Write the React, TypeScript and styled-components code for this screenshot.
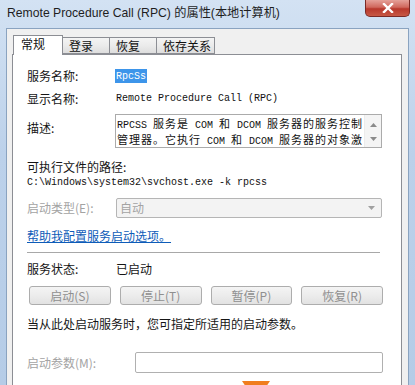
import React from "react";
import styled, { createGlobalStyle } from "styled-components";

const UI_FONT = `"Noto Sans CJK SC", "Liberation Sans", sans-serif`;

const GlobalStyle = createGlobalStyle`
  html, body {
    margin: 0;
    padding: 0;
    background: #c3d6ec;
  }
  #root {
    width: 415px;
    height: 385px;
    overflow: hidden;
  }
`;

// Окно целиком
const Window = styled.div`
  position: relative;
  width: 415px;
  height: 385px;
  display: flex;
  flex-direction: column;
  background: linear-gradient(180deg, #d3e2f3 0%, #bcd1ea 40%, #b5cce7 100%);
  overflow: hidden;
`;

const TitleBar = styled.div`
  flex: none;
  height: 28px;
  display: flex;
  justify-content: space-between;
  align-items: flex-start;
  padding: 0 5px 0 7px;
  box-sizing: border-box;
`;

const TitleText = styled.div`
  margin-top: 5px;
  font-family: "Liberation Sans", "Noto Sans CJK SC", sans-serif;
  font-size: 12.2px;
  line-height: 16px;
  color: #1e1e1e;
  white-space: nowrap;
`;

const CloseButton = styled.div`
  width: 45px;
  height: 17px;
  box-sizing: border-box;
  border: 1px solid #7a2a26;
  border-top: none;
  border-radius: 0 0 5px 5px;
  background: linear-gradient(180deg, #e5a199 0%, #d0685d 45%, #b8382c 55%, #c75845 100%);
  display: flex;
  align-items: center;
  justify-content: center;
`;

const DialogBody = styled.div`
  flex: 1;
  min-height: 0;
  overflow: hidden;
  margin: 0 6px 0 6px;
  padding: 6px 6px 0 5px;
  background: #f0f0f0;
  border: 1px solid #8aa3c0;
  border-bottom: none;
`;

const TabRow = styled.div`
  display: flex;
  align-items: flex-end;
  height: 19px;
  padding-left: 1px;
  position: relative;
  z-index: 1;
`;

const Tab = styled.div<{ $active?: boolean; $first?: boolean; $w?: number }>`
  box-sizing: border-box;
  height: ${(p) => (p.$active ? "20px" : "17px")};
  margin-bottom: ${(p) => (p.$active ? "-1px" : "0")};
  width: ${(p) => (p.$w ? `${p.$w}px` : "47px")};
  padding-left: ${(p) => (p.$active ? "7px" : "6px")};
  border: 1px solid #8c8e94;
  border-bottom: ${(p) => (p.$active ? "none" : "1px solid #8c8e94")};
  border-left: ${(p) => (p.$first ? "1px solid #8c8e94" : "none")};
  background: ${(p) =>
    p.$active ? "#ffffff" : "linear-gradient(180deg, #f4f4f4 0%, #ebebeb 50%, #dedede 100%)"};
  font-family: ${UI_FONT};
  font-size: 12px;
  line-height: 16px;
  color: #111;
  white-space: nowrap;
`;

const Panel = styled.div`
  height: 340px;
  background: #ffffff;
  border: 1px solid #8c8e94;
  padding: 13px 18px 0 14px;
  display: flex;
  flex-direction: column;
`;

const Row = styled.div<{ $mt?: number; $h?: number }>`
  display: flex;
  align-items: center;
  margin-top: ${(p) => p.$mt ?? 0}px;
  height: ${(p) => p.$h ?? 16}px;
  flex: none;
`;

const Label = styled.div<{ $w?: number; $disabled?: boolean; $top?: number }>`
  width: ${(p) => p.$w ?? 89}px;
  flex: none;
  font-family: ${UI_FONT};
  font-size: 12px;
  line-height: 16px;
  color: ${(p) => (p.$disabled ? "#a3a3a3" : "#151515")};
  white-space: nowrap;
  align-self: ${(p) => (p.$top !== undefined ? "flex-start" : "center")};
  margin-top: ${(p) => p.$top ?? 0}px;
`;

const Text = styled.div<{ $disabled?: boolean }>`
  font-family: ${UI_FONT};
  font-size: 12px;
  line-height: 16px;
  color: ${(p) => (p.$disabled ? "#a3a3a3" : "#151515")};
  white-space: nowrap;
`;

// Моноширинная строка: латиница 6px, иероглифы 12px
const MonoRow = styled.div`
  display: flex;
  align-items: baseline;
  height: 16px;
  white-space: pre;
  color: #111;
`;

const Narrow = styled.span`
  line-height: 16px;
  font-family: "Liberation Mono", monospace;
  font-size: 10px;
`;

const Wide = styled.span`
  line-height: 16px;
  font-family: "Noto Sans CJK SC", sans-serif;
  font-size: 11px;
  letter-spacing: 1px;
`;

const Selected = styled.div`
  margin-left: -1px;
  padding: 0 1px;
  height: 14px;
  display: flex;
  align-items: center;
  background: #3d95ea;
  font-family: "Liberation Mono", monospace;
  font-size: 10px;
  color: #ffffff;
`;

const DescBox = styled.div`
  margin-left: -1px;
  width: 267px;
  height: 34px;
  box-sizing: border-box;
  border: 1px solid #ababab;
  display: flex;
`;

const DescText = styled.div`
  flex: 1;
  padding: 0 0 0 1px;
`;

const ScrollBar = styled.div`
  width: 17px;
  background: #f4f4f4;
  border-left: 1px solid #ececec;
  display: flex;
  flex-direction: column;
  align-items: center;
  justify-content: space-between;
  padding: 8px 0 6px;
  box-sizing: border-box;
`;

const Select = styled.div`
  width: 266px;
  height: 20px;
  box-sizing: border-box;
  border: 1px solid #b5b5b5;
  border-radius: 2px;
  background: #f3f3f3;
  display: flex;
  align-items: center;
  justify-content: space-between;
  padding: 0 6px 0 3px;
`;

const Link = styled.div`
  font-family: ${UI_FONT};
  font-size: 12px;
  line-height: 16px;
  color: #0e5cb8;
  text-decoration: underline;
  white-space: nowrap;
`;

const Separator = styled.div`
  flex: none;
  margin-top: 8px;
  width: 353px;
  height: 1px;
  background: #a8a8a8;
`;

const ButtonRow = styled.div`
  flex: none;
  display: flex;
  gap: 9px;
  margin-top: 9px;
  margin-left: 2px;
`;

const Button = styled.div`
  width: 82px;
  height: 19px;
  box-sizing: border-box;
  border: 1px solid #adadad;
  border-radius: 3px;
  background: linear-gradient(180deg, #f4f4f4 0%, #ececec 50%, #e2e2e2 100%);
  display: flex;
  align-items: center;
  justify-content: center;
  font-family: ${UI_FONT};
  font-size: 12px;
  color: #8f8f8f;
  white-space: nowrap;
`;

const Input = styled.div`
  width: 248px;
  height: 21px;
  box-sizing: border-box;
  border: 1px solid #b0b0b0;
  border-radius: 2px;
  background: #ffffff;
`;

const Watermark = styled.div`
  position: absolute;
  left: 242px;
  top: 381px;
  width: 28px;
  height: 5px;
  background: #f07d1e;
  clip-path: polygon(0 0, 100% 0, 88% 100%, 12% 100%);
`;

const splitRuns = (text: string) => {
  const runs: { wide: boolean; s: string }[] = [];
  for (const ch of text) {
    const wide = ch.charCodeAt(0) > 0x2e80;
    const last = runs[runs.length - 1];
    if (last && last.wide === wide) last.s += ch;
    else runs.push({ wide, s: ch });
  }
  return runs;
};

const MonoLine: React.FC<{ text: string }> = ({ text }) => (
  <MonoRow>
    {splitRuns(text).map((r, i) =>
      r.wide ? <Wide key={i}>{r.s}</Wide> : <Narrow key={i}>{r.s}</Narrow>
    )}
  </MonoRow>
);

const Arrow: React.FC<{ up?: boolean; color?: string }> = ({ up, color = "#8a8a8a" }) => (
  <svg width="7" height="4" viewBox="0 0 7 4">
    <polygon points={up ? "0,4 7,4 3.5,0" : "0,0 7,0 3.5,4"} fill={color} />
  </svg>
);

export default function App() {
  return (
    <>
      <GlobalStyle />
      <Window>
        <TitleBar>
          <TitleText>Remote Procedure Call (RPC) 的属性(本地计算机)</TitleText>
          <CloseButton>
            <svg width="12" height="10" viewBox="0 0 12 10">
              <path d="M2 1 L10 9 M10 1 L2 9" stroke="#ffffff" strokeWidth="2.4" strokeLinecap="square" />
            </svg>
          </CloseButton>
        </TitleBar>
        <DialogBody>
          <TabRow>
            <Tab $active $first $w={50}>常规</Tab>
            <Tab $w={47}>登录</Tab>
            <Tab $w={47}>恢复</Tab>
            <Tab $w={58}>依存关系</Tab>
          </TabRow>
          <Panel>
            <Row>
              <Label>服务名称:</Label>
              <Selected>RpcSs</Selected>
            </Row>
            <Row $mt={7}>
              <Label>显示名称:</Label>
              <MonoLine text="Remote Procedure Call (RPC)" />
            </Row>
            <Row $mt={7} $h={34}>
              <Label $top={6}>描述:</Label>
              <DescBox>
                <DescText>
                  <MonoLine text="RPCSS 服务是 COM 和 DCOM 服务器的服务控制" />
                  <MonoLine text="管理器。它执行 COM 和 DCOM 服务器的对象激" />
                </DescText>
                <ScrollBar>
                  <Arrow up />
                  <Arrow />
                </ScrollBar>
              </DescBox>
            </Row>
            <Row $mt={11}>
              <Text>可执行文件的路径:</Text>
            </Row>
            <Row>
              <MonoLine text="C:\Windows\system32\svchost.exe -k rpcss" />
            </Row>
            <Row $mt={7} $h={20}>
              <Label $disabled>启动类型(E):</Label>
              <Select>
                <Text $disabled>自动</Text>
                <Arrow color="#a0a0a0" />
              </Select>
            </Row>
            <Row $mt={10}>
              <Link>帮助我配置服务启动选项。</Link>
            </Row>
            <Separator />
            <Row $mt={8}>
              <Label>服务状态:</Label>
              <Text>已启动</Text>
            </Row>
            <ButtonRow>
              <Button>启动(S)</Button>
              <Button>停止(T)</Button>
              <Button>暂停(P)</Button>
              <Button>恢复(R)</Button>
            </ButtonRow>
            <Row $mt={11}>
              <Text>当从此处启动服务时，您可指定所适用的启动参数。</Text>
            </Row>
            <Row $mt={20} $h={21}>
              <Label $disabled $w={108}>启动参数(M):</Label>
              <Input />
            </Row>
          </Panel>
        </DialogBody>
        <Watermark />
      </Window>
    </>
  );
}
